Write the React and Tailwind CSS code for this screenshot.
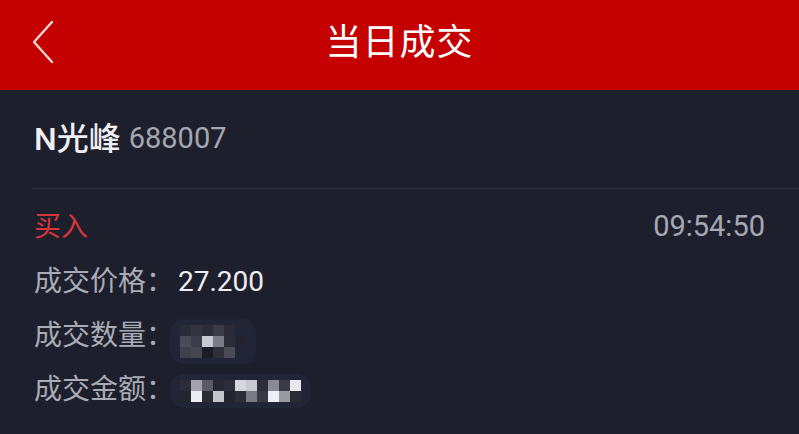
import React from 'react'

const font = { fontFamily: 'Roboto, "Noto Sans CJK SC", sans-serif' }

// mosaic blocks for the blurred values: [col, row, color]
const qtyBlocks = [
  [0, 0, '#2a2b38'], [1, 0, '#33343f'], [2, 0, '#2b2c37'], [3, 0, '#3a3b46'], [4, 0, '#2a2b36'],
  [0, 1, '#4a4b56'], [1, 1, '#3c3d48'], [2, 1, '#c9c9d2'], [3, 1, '#7b7c86'], [4, 1, '#2c2d38'], [5, 1, '#232430'],
  [0, 2, '#3f404b'], [1, 2, '#45464f'], [2, 2, '#1b1c26'], [3, 2, '#2e2f3a'], [4, 2, '#4b4c55'],
]
const amtBlocks = [
  [0, 0, '#2b2c37'], [1, 0, '#a3a3ac'], [2, 0, '#5a5b66'], [3, 0, '#262733'], [4, 0, '#2c2d38'],
  [5, 0, '#d6d6de'], [6, 0, '#c8c8d1'], [7, 0, '#2d2e39'], [8, 0, '#8a8a94'], [9, 0, '#3a3b45'], [10, 0, '#e6e6ee'],
  [0, 1, '#24252f'], [1, 1, '#ececf4'], [2, 1, '#2a2b35'], [3, 1, '#c4c4cc'], [4, 1, '#23242e'],
  [5, 1, '#2c2d37'], [6, 1, '#7a7b85'], [7, 1, '#383945'], [8, 1, '#eeeef6'], [9, 1, '#9a9aa3'], [10, 1, '#2a2b35'],
]

function Mosaic({ blocks, cols, rows, size }) {
  return (
    <div className="rounded-[14px] bg-[#222536] px-[10px] py-[6px]">
      <div
        className="grid"
        style={{ gridTemplateColumns: `repeat(${cols}, ${size}px)`, gridTemplateRows: `repeat(${rows}, ${size}px)` }}
      >
        {blocks.map(([c, r, color], i) => (
          <div key={i} style={{ gridColumn: c + 1, gridRow: r + 1, background: color }} />
        ))}
      </div>
    </div>
  )
}

export default function App() {
  return (
    <div className="w-[799px] h-[434px] bg-[#1e1f2d] overflow-hidden" style={font}>
      {/* Header */}
      <header className="relative h-[90px] bg-[#c40000] flex items-center justify-center">
        <svg className="absolute left-[28px] top-[19px]" width="30" height="46" viewBox="0 0 30 46" fill="none">
          <path d="M24 3 L6 23 L24 43" stroke="#f4d6d6" strokeWidth="2.4" strokeLinecap="round" strokeLinejoin="round" />
        </svg>
        <h1 className="text-[36px] leading-none text-white tracking-[1px] -mt-[4px]">当日成交</h1>
      </header>

      {/* Stock name */}
      <div className="h-[98px] flex items-center px-[34px]">
        <span className="text-[32px] text-[#eeeef2] font-medium">N光峰</span>
        <span className="ml-[8px] text-[29px] text-[#a4a6b0]">688007</span>
      </div>
      <div className="ml-[32px] h-px bg-[#2d2f3e]" />

      {/* Trade detail */}
      <div className="px-[34px]">
        <div className="mt-[22px] h-[32px] flex items-center justify-between">
          <span className="text-[27px] text-[#d8353b]">买入</span>
          <span className="text-[29px] text-[#a6a8b2]">09:54:50</span>
        </div>
        <div className="mt-[12px] h-[54px] flex items-center">
          <span className="text-[28px] text-[#a9abb5]">成交价格：</span>
          <span className="text-[28px] text-[#ededf2] ml-[4px]">27.200</span>
        </div>
        <div className="h-[54px] flex items-center">
          <span className="text-[28px] text-[#a9abb5]">成交数量：</span>
          <div className="-ml-[4px] mt-[10px]">
            <Mosaic blocks={qtyBlocks} cols={6} rows={3} size={11} />
          </div>
        </div>
        <div className="h-[54px] flex items-center">
          <span className="text-[28px] text-[#a9abb5]">成交金额：</span>
          <div className="-ml-[4px] mt-[2px]">
            <Mosaic blocks={amtBlocks} cols={11} rows={2} size={11} />
          </div>
        </div>
      </div>
    </div>
  )
}
